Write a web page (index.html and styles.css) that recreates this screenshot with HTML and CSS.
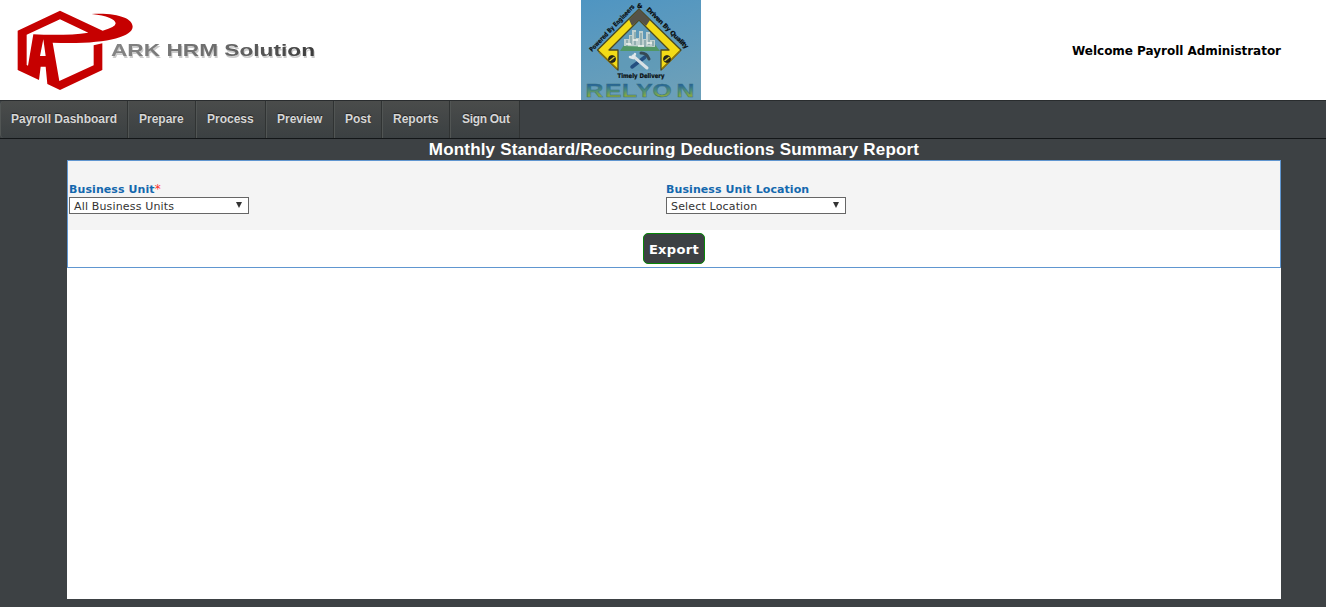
FILE: index.html
```
<!DOCTYPE html>
<html lang="en">
<head>
<meta charset="utf-8">
<title>Monthly Standard/Reoccuring Deductions Summary Report</title>
<link rel="stylesheet" href="styles.css">
</head>
<body>
<header class="header">
  <svg class="brand" viewBox="0 0 330 100" width="330" height="100">
    <defs>
      <linearGradient id="word" x1="0" x2="1"><stop offset="0" stop-color="#858585"/><stop offset=".5" stop-color="#6d6d6d"/><stop offset="1" stop-color="#3c3c3c"/></linearGradient>
    </defs>
    <g class="mark" transform="scale(.33333)" fill="#c60000" fill-rule="evenodd">
      <path d="M180 32L308 92Q347 82 347 70Q344 50 275 42C355 38 398 56 398 80C397 112 310 134 158 128L178 243L281 196V136L307 130V210L180 270L142 252L137 200H122L117 240L53 210V92ZM180 58L80 104V195L84 197L100 103C160 106 220 105 265 98ZM130 118L120 168H137Z"/>
    </g>
    <g class="wordmark">
      <text x="112" y="57.5" textLength="204" lengthAdjust="spacingAndGlyphs" fill="#ccc">ARK HRM Solution</text>
      <text x="111" y="56" textLength="204" lengthAdjust="spacingAndGlyphs" fill="url(#word)">ARK HRM Solution</text>
    </g>
  </svg>
  <svg class="client" viewBox="0 0 120 100" width="120" height="100">
    <defs>
      <linearGradient id="sky" x1="0" y1="0" x2=".3" y2="1"><stop offset="0" stop-color="#4f95c2"/><stop offset="1" stop-color="#6b9fb9"/></linearGradient>
      <linearGradient id="metal" x1="0" y1="0" x2="0" y2="1"><stop offset=".2" stop-color="#235f9d"/><stop offset=".5" stop-color="#4c8e79"/><stop offset=".8" stop-color="#93ad35"/></linearGradient>
      <path id="rise" d="M11 52L56 5"/>
      <path id="fall" d="M65 10L109 53"/>
    </defs>
    <rect width="120" height="100" fill="url(#sky)"/>
    <path d="M58 10L17 53L40 71H75L99 53Z" fill="#5f99b4" opacity=".6"/>
    <path d="M58 9L16.500 50L37 70V50H28L58 20L88 50H80V70L100 50Z" fill="#f3db17" stroke="#4b4920" stroke-width="1.300" stroke-linejoin="round"/>
    <path d="M58 9L48 19.500L51 26L58 20L65 26L69 20Z" fill="#555247"/>
    <path d="M18 52L36 69M81 69L99 51" stroke="#8b7308" stroke-width="1.500"/>
    <path d="M45 42H72L79 51H39Z" fill="#519766"/>
    <path d="M43 46V39H48V35H51V30H55V38H58V31H62V39H65V32H69V40H74V47Z" fill="#bfd0cf"/>
    <path d="M46 40V46M50 36V44M54 32V45M60 33V47M64 40V48M68 34V45M72 41V46" stroke="#658d92" stroke-width="1"/>
    <path d="M45 44H50M52 40H57M57 46H63M66 43H71" stroke="#f2f6ef" stroke-width="1.500"/>
    <g fill="none" stroke-linecap="round">
      <path d="M64 57L51 67" stroke="#244f80" stroke-width="3.500"/>
      <path d="M52 56L66 68" stroke="#d9e1e5" stroke-width="3"/>
      <path d="M49 57L52 58L54 54" stroke="#e0e7ea" stroke-width="2.500"/>
      <path d="M60 53Q66 53 68 59" stroke="#354854" stroke-width="3"/>
    </g>
    <g fill="#282a1f" stroke="#111" stroke-width=".7"><circle cx="31" cy="59" r="3.500"/><circle cx="86" cy="59" r="3.500"/></g>
    <path d="M28.500 61L33.500 57M83.500 61L88.500 57" stroke="#dfcf2d" stroke-width="1.300"/>
    <g class="motto">
      <text textLength="62" lengthAdjust="spacingAndGlyphs"><textPath href="#rise" textLength="62" lengthAdjust="spacingAndGlyphs">Powered By Engineers</textPath></text>
      <text x="56" y="8">&amp;</text>
      <text><textPath href="#fall" textLength="56" lengthAdjust="spacing">Driven By Quality</textPath></text>
      <text x="36.500" y="77.500" textLength="47" lengthAdjust="spacingAndGlyphs">Timely Delivery</text>
    </g>
    <text class="client-name" transform="scale(1.3 1)" x="3.4 18.5 31.5 42.500 55 73.500" y="97" fill="url(#metal)" stroke="#36717d">RELYON</text>
  </svg>
  <div class="welcome">Welcome Payroll Administrator</div>
</header>
<nav class="menu">
  <a class="w128">Payroll Dashboard</a><a class="w68">Prepare</a><a class="w70">Process</a><a class="w68">Preview</a><a class="w48">Post</a><a class="w68">Reports</a><a class="w70 last">Sign Out</a>
</nav>
<main class="page">
  <h1 class="title"><span>Monthly Standard/Reoccuring Deductions Summary Report</span></h1>
  <section class="sheet">
    <form class="panel">
      <div class="fields">
        <div class="field">
          <label class="label">Business Unit<span class="required">*</span></label>
          <div class="select"><span>All Business Units</span><i class="arrow"></i></div>
        </div>
        <div class="field">
          <label class="label">Business Unit Location</label>
          <div class="select"><span>Select Location</span><i class="arrow"></i></div>
        </div>
      </div>
      <div class="actions"><button class="export" type="button">Export</button></div>
    </form>
  </section>
</main>
</body>
</html>
```
FILE: styles.css
```
* { box-sizing: border-box; }
body { margin: 0; height: 607px; overflow: hidden; background: #3d4144; font-family: "DejaVu Sans", sans-serif; }
.header { display: grid; grid-template-columns: 581px 120px 1fr; height: 100px; background: #fff; align-items: center; }
.brand, .client { display: block; }
.mark { filter: blur(1px); }
.wordmark { font: bold 17px "Liberation Sans", sans-serif; filter: blur(.45px); }
.motto { font: bold 6.3px "DejaVu Sans", sans-serif; fill: #090d0e; stroke: #090d0e; stroke-width: .2px; }
.client-name { font: bold 19px "Liberation Sans", sans-serif; stroke-width: .4px; }
.welcome { justify-self: end; margin: 2px 45px 0 0; font: bold 12px/16px "DejaVu Sans", sans-serif; letter-spacing: -.03px; white-space: nowrap; color: #000; }
.menu { display: flex; height: 39px; border-top: 1px solid #292c2e; border-bottom: 1px solid #131618; background: #3d4144; }
.menu a { height: 37px; padding-left: 10px; border-right: 1px solid #303333; border-left: 1px solid #515554; background: linear-gradient(#4a4c4b, #3b4042); color: #d6d6d6; font: bold 12px/36px "Liberation Sans", sans-serif; white-space: nowrap; text-shadow: 0 -1px 1px #222; }
.menu a:first-child { border-radius: 4px 0 0 4px; }
.menu .last { padding-left: 11px; letter-spacing: -.3px; }
.w128 { width: 128px; }
.w68 { width: 68px; }
.w70 { width: 70px; }
.w48 { width: 48px; }
.page { width: 1214px; margin-left: 67px; }
.title { margin: 0; height: 21px; color: #fff; text-align: center; font: bold 17px/21px "Liberation Sans", sans-serif; letter-spacing: .18px; white-space: nowrap; }
.sheet { height: 439px; background: #fff; }
.panel { height: 108px; border: 1px solid #6096d0; }
.fields { display: grid; grid-template-columns: 597px 1fr; height: 69px; padding: 21px 0 0 1px; background: #f4f4f4; }
.label { display: block; height: 15px; color: #1468ae; font: bold 11px/15px "DejaVu Sans", sans-serif; letter-spacing: .09px; }
.required { color: #ff3030; font-size: 12px; line-height: 12px; font-weight: normal; }
.select { display: flex; align-items: center; justify-content: space-between; width: 180px; height: 17px; padding: 1px 6px 0 4px; border: 1px solid #666; background: #fff; color: #333; font-size: 11px; line-height: 15px; letter-spacing: .16px; }
.arrow { width: 0; height: 0; margin-top: -3px; border: solid transparent; border-width: 6px 3.500px 0; border-top-color: #333; }
.actions { display: flex; justify-content: center; padding-top: 3px; }
.export { width: 62px; height: 31px; padding: 2px 0 0; border: 1px solid #078707; border-radius: 5px; background: #3d4144; color: #fff; font: bold 13px "DejaVu Sans", sans-serif; letter-spacing: .35px; }
```
